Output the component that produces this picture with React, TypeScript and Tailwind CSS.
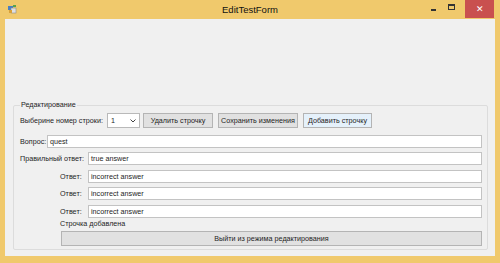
import React from 'react';

const LABEL = 'text-[7.2px] leading-[10px] text-[#1e1e1e] whitespace-nowrap shrink-0';
const FIELD =
  'h-[13px] bg-white border border-[#c3c3c3] flex items-center pl-[2px] text-[7.2px] leading-[10px] text-[#1e1e1e] shrink-0';
const BTN =
  'h-[15px] bg-[#e1e1e1] border border-[#b4b4b4] flex items-center justify-center text-[7.2px] leading-[10px] text-[#1e1e1e] whitespace-nowrap shrink-0';

function AppIcon() {
  return (
    <svg width="9" height="9" viewBox="0 0 9 9">
      <rect x="0" y="1" width="5" height="4" fill="#4a7fc1" />
      <rect x="3" y="3" width="5" height="5" fill="#e0e0e0" stroke="#8a8a8a" strokeWidth="0.6" />
      <rect x="1" y="5" width="3" height="3" fill="#d8a13a" />
      <rect x="5" y="0" width="3" height="2" fill="#5aa34a" />
    </svg>
  );
}

function AnswerRow({ label, value, top }: { label: string; value: string; top: string }) {
  return (
    <div className={`flex items-center ${top}`}>
      <span className={`${LABEL} w-[74px] pl-[46px]`}>{label}</span>
      <div className={`${FIELD} w-[394px]`}>{value}</div>
    </div>
  );
}

export default function App() {
  return (
    <div className="w-[500px] h-[263px] bg-[#f0c96c] flex flex-col overflow-hidden font-['Liberation_Sans',Arial,sans-serif]">
      {/* title bar */}
      <div className="h-[19px] flex items-start">
        <div className="w-[24px] pl-[8px] pt-[5px]">
          <AppIcon />
        </div>
        <div className="flex-1 pt-[3px] text-center text-[9.5px] leading-[13px] text-[#111] pl-[55px]">
          EditTestForm
        </div>
        <div className="w-[24px] flex justify-center pt-[9px]">
          <div className="w-[5px] h-[2px] bg-[#333]" />
        </div>
        <div className="w-[20px] flex justify-start pt-[4px] pl-[3px]">
          <div className="w-[7px] h-[6px] border border-[#333] border-t-2" />
        </div>
        <div className="w-[29px] h-[18px] bg-[#c9504f] flex items-center justify-center text-white text-[9px] leading-none mr-[6px]">
          ✕
        </div>
      </div>

      {/* client area */}
      <div className="mx-[5px] h-[237px] bg-[#f0f0f0] flex flex-col">
        <fieldset className="ml-[8px] mt-[81px] w-[475px] h-[150px] border border-[#dcdcdc] rounded-[2px]">
          <legend className={`${LABEL} ml-[6px] px-[1px]`}>Редактирование</legend>

          <div className="flex items-center mt-[3px] h-[15px]">
            <span className={`${LABEL} pl-[6px] w-[93px]`}>Выберине номер строки:</span>
            <div className="w-[33px] h-[15px] bg-white border border-[#b9b9b9] flex items-center justify-between px-[3px] text-[7.2px] leading-[10px] text-[#1e1e1e] shrink-0">
              <span>1</span>
              <svg width="6" height="4" viewBox="0 0 6 4">
                <path d="M0.5 0.5 L3 3 L5.5 0.5" fill="none" stroke="#444" strokeWidth="1" />
              </svg>
            </div>
            <div className={`${BTN} w-[70px] ml-[3px]`}>Удалить строчку</div>
            <div className={`${BTN} w-[80px] ml-[5px]`}>Сохранить изменения</div>
            <div className={`${BTN} w-[69px] ml-[5px] bg-[#e5f1fb] border-[#7eb4ea]`}>Добавить строчку</div>
          </div>

          <div className="flex items-center mt-[7px]">
            <span className={`${LABEL} pl-[6px] w-[33px]`}>Вопрос:</span>
            <div className={`${FIELD} w-[435px]`}>quest</div>
          </div>

          <div className="flex items-center mt-[4px]">
            <span className={`${LABEL} pl-[6px] w-[74px]`}>Правильный ответ:</span>
            <div className={`${FIELD} w-[394px]`}>true answer</div>
          </div>

          <AnswerRow label="Ответ:" value="incorrect answer" top="mt-[5px]" />
          <AnswerRow label="Ответ:" value="incorrect answer" top="mt-[4px]" />
          <AnswerRow label="Ответ:" value="incorrect answer" top="mt-[5px]" />

          <div className={`${LABEL} pl-[46px] mt-[1px]`}>Строчка добавлена</div>
          <div className="pl-[47px] mt-[2px]">
            <div className={`${BTN} w-[421px] h-[14px]`}>Выйти из режима редактирования</div>
          </div>
        </fieldset>
      </div>
    </div>
  );
}
